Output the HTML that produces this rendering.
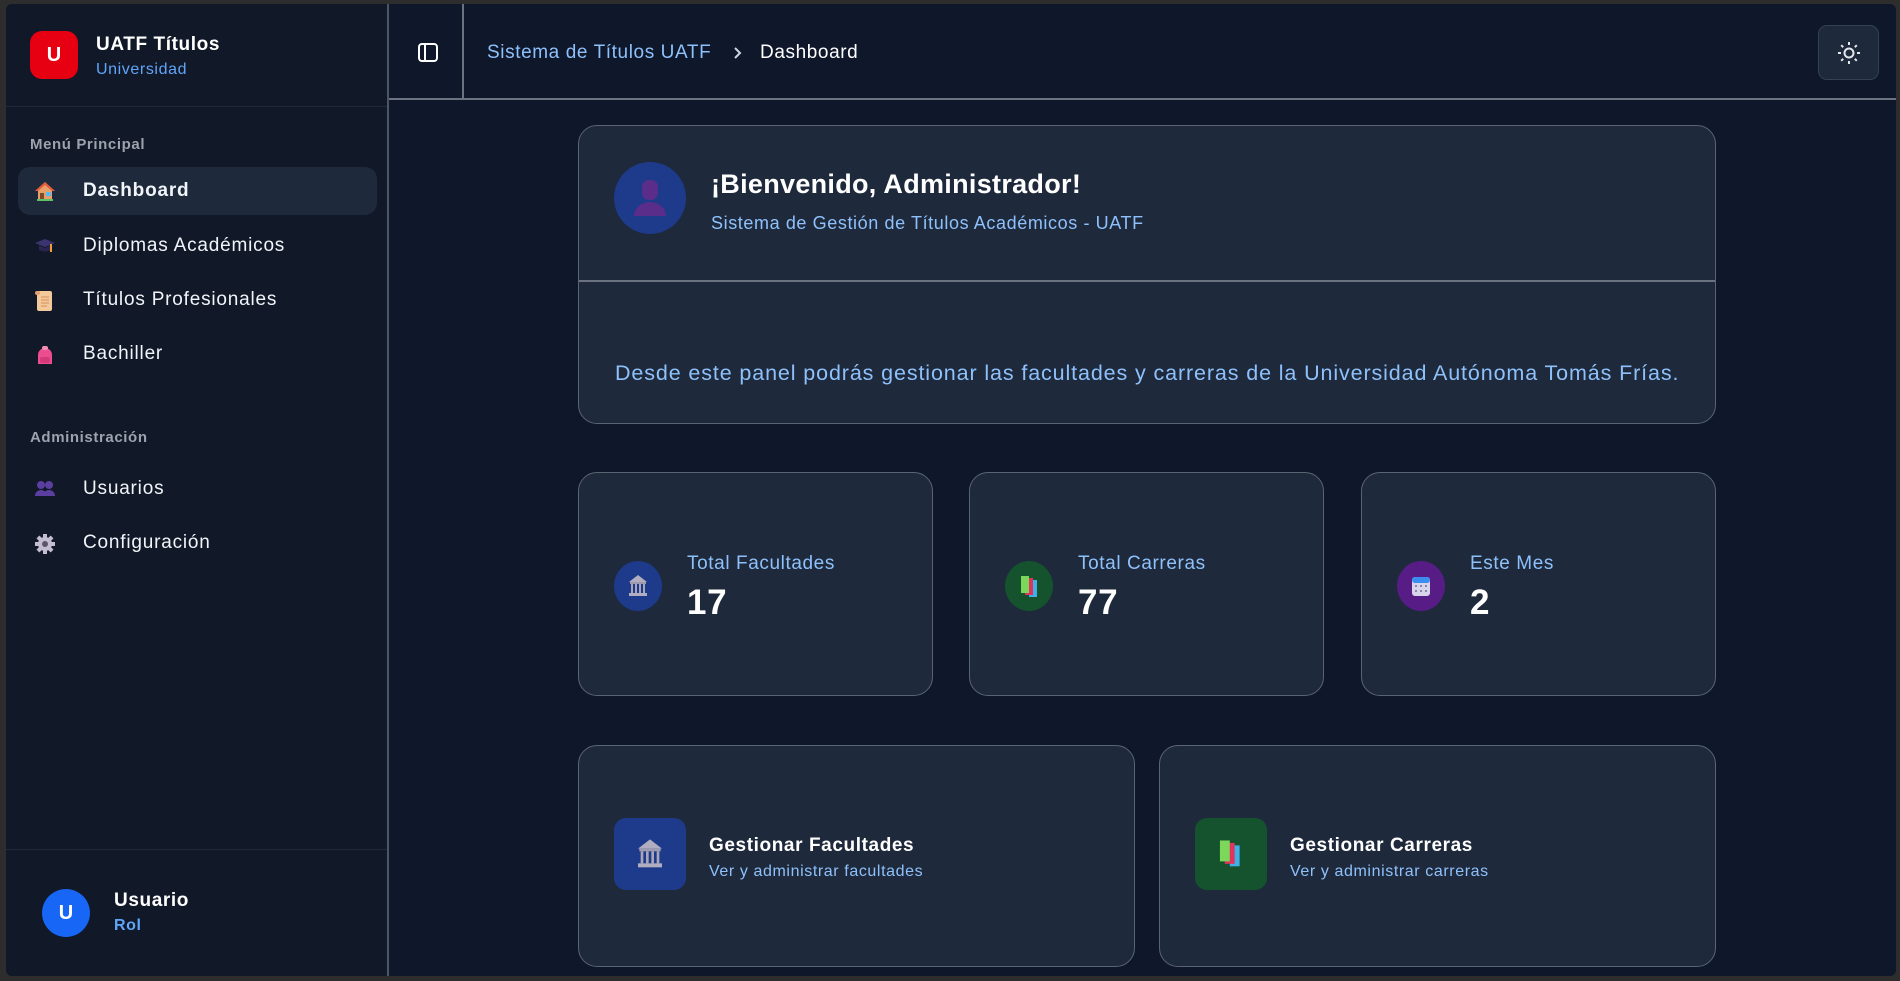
<!DOCTYPE html>
<html><head><meta charset="utf-8"><style>
*{box-sizing:border-box;margin:0;padding:0}
body{width:1900px;height:981px;background:#2d2d2d;font-family:"Liberation Sans",sans-serif;position:relative;overflow:hidden}
.app{position:absolute;left:6px;top:4px;width:1890px;height:972px;background:#0f172a;border-radius:6px;overflow:hidden}
.side{position:absolute;left:0;top:0;width:383px;height:972px;background:#111827;border-right:2px solid #4b5563}
.abs{position:absolute}
.t{position:absolute;white-space:nowrap;letter-spacing:0.6px}
.item{position:absolute;left:12px;width:359px;height:48px;border-radius:12px}
.item .lbl{position:absolute;left:65px;top:13px;font-size:19px;color:#f1f5f9;letter-spacing:0.8px;white-space:nowrap}
.item svg{position:absolute;left:16px;top:14px}
.card{position:absolute;background:#1e293b;border:1.5px solid #5b6472;border-radius:19px}
.lab{color:#8ec1fb}
</style></head><body>
<div class="app">
 <div class="side">
  <div class="abs" style="left:24px;top:27px;width:48px;height:48px;border-radius:12px;background:#e60012;color:#fff;font-weight:bold;font-size:20px;text-align:center;line-height:48px">U</div>
  <div class="t" style="left:90px;top:30px;font-size:19px;font-weight:bold;color:#fff">UATF Títulos</div>
  <div class="t" style="left:90px;top:57px;font-size:16px;color:#60a5fa">Universidad</div>
  <div class="abs" style="left:0;top:102px;width:381px;height:1px;background:#1f2937"></div>
  <div class="t" style="left:24px;top:132px;font-size:15px;font-weight:bold;color:#9ca3af">Menú Principal</div>
  <div class="item" style="top:163px;background:#1e293b">
   <svg width="22" height="20" viewBox="0 0 22 20"><path d="M11 1L1 10h3v9h14v-9h3z" fill="#e8a06a"/><path d="M11 1L1 10h3L11 4l7 6h3z" fill="#e25b3a"/><rect x="6" y="12" width="4" height="7" fill="#7a4a2a"/><rect x="12" y="11" width="5" height="4" fill="#5bb8f0"/><rect x="3" y="18" width="16" height="2" fill="#5fc065"/></svg>
   <div class="lbl" style="font-weight:bold">Dashboard</div></div>
  <div class="item" style="top:218px">
   <svg width="22" height="20" viewBox="0 0 22 20"><path d="M1 7L11 3l10 4-10 4z" fill="#3b3470"/><path d="M5 9v5c3 2 9 2 12 0V9l-6 3z" fill="#2a2450"/><path d="M17 8v8" stroke="#f0a030" stroke-width="2"/></svg>
   <div class="lbl">Diplomas Académicos</div></div>
  <div class="item" style="top:272px">
   <svg width="22" height="22" viewBox="0 0 22 22"><rect x="3" y="1" width="15" height="20" rx="2" fill="#f3c89a"/><rect x="1" y="1" width="5" height="4" rx="2" fill="#e0a070"/><path d="M7 7h8M7 10h8M7 13h8M7 16h6" stroke="#d58f5a" stroke-width="1"/></svg>
   <div class="lbl">Títulos Profesionales</div></div>
  <div class="item" style="top:326px">
   <svg width="22" height="22" viewBox="0 0 22 22"><path d="M4 20V11a7 7 0 0114 0v9z" fill="#ec4d8f"/><rect x="8" y="2" width="6" height="4" rx="2" fill="#f08fb4"/><rect x="6" y="13" width="10" height="6" rx="2" fill="#d43a7a"/></svg>
   <div class="lbl">Bachiller</div></div>
  <div class="t" style="left:24px;top:425px;font-size:15px;font-weight:bold;color:#9ca3af">Administración</div>
  <div class="item" style="top:461px">
   <svg width="22" height="20" viewBox="0 0 22 20"><circle cx="7" cy="6" r="4" fill="#5b3fa0"/><circle cx="15" cy="6" r="4" fill="#5b3fa0"/><path d="M1 17a6 6 0 0112 0zM9 17a6 6 0 0112 0z" fill="#5b3fa0"/></svg>
   <div class="lbl">Usuarios</div></div>
  <div class="item" style="top:515px">
   <svg width="22" height="22" viewBox="0 0 22 22"><g fill="#c4bcd0"><circle cx="11" cy="11" r="7"/><rect x="9" y="1" width="4" height="20"/><rect x="1" y="9" width="20" height="4"/><rect x="9" y="1" width="4" height="20" transform="rotate(45 11 11)"/><rect x="9" y="1" width="4" height="20" transform="rotate(-45 11 11)"/></g><circle cx="11" cy="11" r="3" fill="#5c5468"/></svg>
   <div class="lbl">Configuración</div></div>
  <div class="abs" style="left:0;top:845px;width:381px;height:1px;background:#1f2937"></div>
  <div class="abs" style="left:36px;top:885px;width:48px;height:48px;border-radius:50%;background:#1766f5;color:#fff;font-weight:bold;font-size:20px;text-align:center;line-height:48px">U</div>
  <div class="t" style="left:108px;top:886px;font-size:19px;font-weight:bold;color:#fff">Usuario</div>
  <div class="t" style="left:108px;top:913px;font-size:16px;font-weight:bold;color:#60a5fa">Rol</div>
 </div>
 <div class="abs" style="left:383px;top:94px;width:1507px;height:1.5px;background:#6b7280"></div>
 <div class="abs" style="left:456px;top:0;width:1.5px;height:95px;background:#6b7280"></div>
 <svg class="abs" style="left:411px;top:38px" width="22" height="22" viewBox="0 0 22 22"><rect x="2" y="2" width="18" height="17" rx="3" fill="none" stroke="#fff" stroke-width="2"/><path d="M8 2v17" stroke="#fff" stroke-width="2"/></svg>
 <div class="t" style="left:481px;top:38px;font-size:19px;color:#8ec1fb">Sistema de Títulos UATF</div>
 <svg class="abs" style="left:726px;top:42px" width="12" height="14" viewBox="0 0 12 14"><path d="M3 2l5 5-5 5" fill="none" stroke="#cbd5e1" stroke-width="2"/></svg>
 <div class="t" style="left:754px;top:38px;font-size:19px;color:#fff">Dashboard</div>
 <div class="abs" style="left:1812px;top:21px;width:61px;height:55px;border-radius:9px;background:#1e293b;border:1px solid #334155"></div>
 <svg class="abs" style="left:1831px;top:37px" width="24" height="24" viewBox="0 0 24 24"><g stroke="#e5e7eb" stroke-width="2" fill="none"><circle cx="12" cy="12" r="4.5"/><path d="M12 1v3M12 20v3M1 12h3M20 12h3M4.2 4.2l2 2M17.8 17.8l2 2M4.2 19.8l2-2M17.8 6.2l2-2"/></g></svg>
 <div class="card" style="left:572px;top:121px;width:1138px;height:299px">
  <div class="abs" style="left:0;top:154px;width:1136px;height:1.5px;background:#6b7280"></div>
  <div class="abs" style="left:35px;top:36px;width:72px;height:72px;border-radius:50%;background:#1e3a8a"></div>
  <svg class="abs" style="left:53px;top:52px" width="36" height="40" viewBox="0 0 36 40"><rect x="10" y="2" width="16" height="20" rx="7" fill="#5a2d8a"/><path d="M2 38a16 14 0 0132 0z" fill="#5a2d8a"/></svg>
  <div class="t" style="left:132px;top:43px;font-size:27px;font-weight:bold;color:#fff;letter-spacing:0.3px">¡Bienvenido, Administrador!</div>
  <div class="t" style="left:132px;top:87px;font-size:18px;color:#8ec1fb">Sistema de Gestión de Títulos Académicos - UATF</div>
  <div class="t" style="left:36px;top:235px;font-size:21.5px;color:#8ec1fb;letter-spacing:0.88px">Desde este panel podrás gestionar las facultades y carreras de la Universidad Autónoma Tomás Frías.</div>
 </div>
 <div class="card" style="left:572px;top:468px;width:355px;height:224px">
  <div class="abs" style="left:35px;top:88px;width:48px;height:50px;border-radius:50%;background:#1e3a8a"></div>
  <svg class="abs" style="left:47px;top:101px" width="24" height="24" viewBox="0 0 24 24"><path d="M12 1L3 8h18z" fill="#b0aec0"/><rect x="4" y="8" width="16" height="2" fill="#9d9bb0"/><g fill="#a8a6b8"><rect x="5" y="10" width="2" height="9"/><rect x="9" y="10" width="2" height="9"/><rect x="13" y="10" width="2" height="9"/><rect x="17" y="10" width="2" height="9"/></g><rect x="3" y="19" width="18" height="3" fill="#b0aec0"/></svg>
  <div class="t lab" style="left:108px;top:80px;font-size:19px">Total Facultades</div>
  <div class="t" style="left:108px;top:110px;font-size:35px;font-weight:bold;color:#fff">17</div>
 </div>
 <div class="card" style="left:963px;top:468px;width:355px;height:224px">
  <div class="abs" style="left:35px;top:88px;width:48px;height:50px;border-radius:50%;background:#14532d"></div>
  <svg class="abs" style="left:47px;top:101px" width="26" height="26" viewBox="0 0 26 26"><rect x="12" y="6" width="8" height="17" fill="#3fb0e8"/><rect x="8" y="4" width="8" height="17" fill="#e0345c"/><rect x="4" y="2" width="8" height="17" fill="#7cd85a"/></svg>
  <div class="t lab" style="left:108px;top:80px;font-size:19px">Total Carreras</div>
  <div class="t" style="left:108px;top:110px;font-size:35px;font-weight:bold;color:#fff">77</div>
 </div>
 <div class="card" style="left:1355px;top:468px;width:355px;height:224px">
  <div class="abs" style="left:35px;top:88px;width:48px;height:50px;border-radius:50%;background:#581c87"></div>
  <svg class="abs" style="left:47px;top:101px" width="24" height="24" viewBox="0 0 24 24"><rect x="3" y="3" width="18" height="19" rx="3" fill="#d8d4ec"/><rect x="3" y="3" width="18" height="6" rx="3" fill="#3a8ef0"/><g fill="#8a86a8"><rect x="6" y="11" width="2" height="2"/><rect x="11" y="11" width="2" height="2"/><rect x="16" y="11" width="2" height="2"/><rect x="6" y="16" width="2" height="2"/><rect x="11" y="16" width="2" height="2"/><rect x="16" y="16" width="2" height="2"/></g></svg>
  <div class="t lab" style="left:108px;top:80px;font-size:19px">Este Mes</div>
  <div class="t" style="left:108px;top:110px;font-size:35px;font-weight:bold;color:#fff">2</div>
 </div>
 <div class="card" style="left:572px;top:741px;width:557px;height:222px">
  <div class="abs" style="left:35px;top:72px;width:72px;height:72px;border-radius:12px;background:#1e3a8a"></div>
  <svg class="abs" style="left:55px;top:92px" width="32" height="32" viewBox="0 0 24 24"><path d="M12 1L3 8h18z" fill="#b0aec0"/><rect x="4" y="8" width="16" height="2" fill="#9d9bb0"/><g fill="#a8a6b8"><rect x="5" y="10" width="2" height="9"/><rect x="9" y="10" width="2" height="9"/><rect x="13" y="10" width="2" height="9"/><rect x="17" y="10" width="2" height="9"/></g><rect x="3" y="19" width="18" height="3" fill="#b0aec0"/></svg>
  <div class="t" style="left:130px;top:89px;font-size:19px;font-weight:bold;color:#fff">Gestionar Facultades</div>
  <div class="t lab" style="left:130px;top:117px;font-size:16px">Ver y administrar facultades</div>
 </div>
 <div class="card" style="left:1153px;top:741px;width:557px;height:222px">
  <div class="abs" style="left:35px;top:72px;width:72px;height:72px;border-radius:12px;background:#14532d"></div>
  <svg class="abs" style="left:55px;top:92px" width="32" height="32" viewBox="0 0 26 26"><rect x="12" y="6" width="8" height="17" fill="#3fb0e8"/><rect x="8" y="4" width="8" height="17" fill="#e0345c"/><rect x="4" y="2" width="8" height="17" fill="#7cd85a"/></svg>
  <div class="t" style="left:130px;top:89px;font-size:19px;font-weight:bold;color:#fff">Gestionar Carreras</div>
  <div class="t lab" style="left:130px;top:117px;font-size:16px">Ver y administrar carreras</div>
 </div>
</div>
</body></html>
